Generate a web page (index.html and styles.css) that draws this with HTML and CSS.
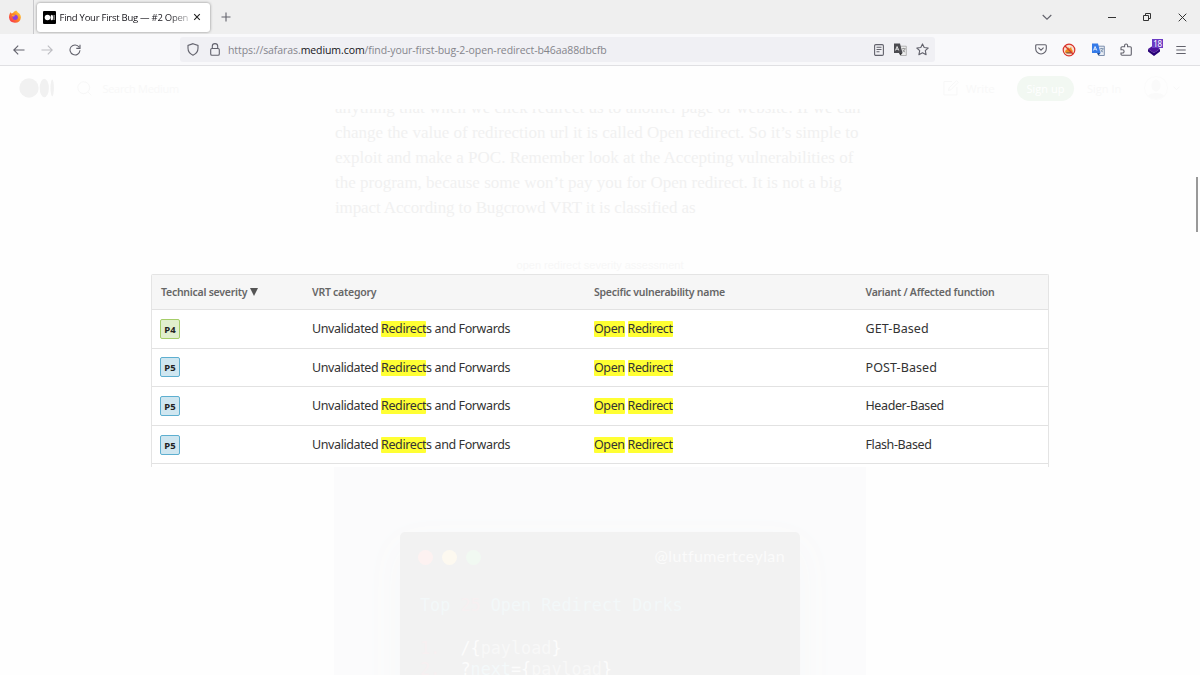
FILE: index.html
```html
<!DOCTYPE html>
<html lang="en">
<head>
    <meta charset="UTF-8">
    <title>Find Your First Bug — #2 Open Redirect</title>
    <link rel="stylesheet" href="styles.css">
</head>
<body>

    <!-- Tab strip -->
    <div class="tabbar">
        <div class="pinned">
            <svg width="14" height="14" viewBox="0 0 14 14">
                <defs>
                    <linearGradient id="fire" x1="1" y1="0" x2="0" y2="1">
                        <stop offset="0" stop-color="#ffe64a"/>
                        <stop offset="0.45" stop-color="#ff8a22"/>
                        <stop offset="1" stop-color="#f5205a"/>
                    </linearGradient>
                </defs>
                <path d="M8.2.6c.8.5 1.2 1.2 1.7 1.9 1.8.7 3 2.7 3 5A6 6 0 0 1 1 7.600c0-2.200.5-3.800 1.500-5.300l1 1.200L5 3c.7-1 1.800-1.900 3.200-2.400z" fill="url(#fire)"/>
                <circle cx="7.200" cy="7.300" r="2.600" fill="#8b3ee0"/>
                <path d="M3.500 5.200c1.500-.6 2.600 0 4 .5-1 .2-1.400.7-2.300.9z" fill="#ffb02e"/>
            </svg>
        </div>
        <div class="tab">
            <svg width="13" height="13" viewBox="0 0 13 13">
                <rect width="13" height="13" rx="1"/>
                <circle cx="4.500" cy="6.500" r="2.800" fill="#fff"/>
                <ellipse cx="8.800" cy="6.500" rx="1.300" ry="2.700" fill="#fff"/>
                <path d="M11.100 4v5" stroke="#fff" stroke-width=".8"/>
            </svg>
            <span class="tab-title">Find Your First Bug — #2 Open</span>
            <svg class="tab-close" width="8" height="8" viewBox="0 0 8 8"><path d="M1.200 1.200l5.600 5.600M6.800 1.200L1.200 6.800"/></svg>
        </div>
        <svg class="icon new-tab" width="10" height="10" viewBox="0 0 10 10"><path d="M5 .5v9M.5 5h9"/></svg>
        <div class="window-buttons">
            <svg class="icon" width="10" height="10" viewBox="0 0 10 10"><path d="M.7 3L5 7.200 9.300 3"/></svg>
            <svg class="icon dark minimize" width="8" height="10" viewBox="0 0 8 10"><path d="M0 5.500h8"/></svg>
            <svg class="icon dark" width="8" height="8" viewBox="0 0 8 8"><path d="M.5 2.500h5v5h-5zM2.500 2.500v-2h5v5h-2"/></svg>
            <svg class="icon dark" width="9" height="9" viewBox="0 0 9 9"><path d="M.7.7l7.600 7.600M8.300.7L.7 8.300"/></svg>
        </div>
    </div>

    <!-- Toolbar -->
    <div class="toolbar">
        <div class="nav-buttons">
            <svg class="icon" width="12" height="12" viewBox="0 0 12 12"><path d="M11.500 6H1M5.200 1.600L.8 6l4.400 4.400"/></svg>
            <svg class="icon faded" width="12" height="12" viewBox="0 0 12 12"><path d="M.5 6H11M6.800 1.600L11.200 6l-4.400 4.400"/></svg>
            <svg class="icon" width="12" height="12" viewBox="0 0 12 12"><path d="M10.200 3.200A5 5 0 1 0 11 6.300M11 .7v3.700H7.300"/></svg>
        </div>
        <div class="urlbar">
            <svg class="icon" width="12" height="13" viewBox="0 0 12 13"><path d="M6 .7l5 1.800v2.800C11 8.700 8.800 11 6 12.200 3.200 11 1 8.700 1 5.300V2.500z"/></svg>
            <svg class="icon lock" width="10" height="13" viewBox="0 0 10 13"><rect x=".7" y="5.500" width="8.600" height="6.800" rx="1.300"/><path d="M2.300 5.500V3.300a2.700 2.700 0 0 1 5.400 0v2.200"/></svg>
            <span class="url">https://safaras.<b>medium.com</b>/find-your-first-bug-2-open-redirect-b46aa88dbcfb</span>
            <div class="url-actions">
                <svg class="icon" width="10" height="12" viewBox="0 0 10 12"><rect x=".6" y=".6" width="8.800" height="10.800" rx="1.200"/><path d="M2.500 3.300h5M2.500 5.500h5M2.500 7.700h3"/></svg>
                <svg width="14" height="13" viewBox="0 0 14 13">
                    <path d="M6.500 3.200h6.800v9.300H7.800z" fill="#eee" stroke="#999" stroke-width=".7"/>
                    <path d="M1 .5h6L9.500 10H1z" fill="#4b4b50"/>
                    <path d="M6 10h3.500L7.300 12.500z" fill="#333"/>
                    <path d="M2.400 7.500l1.700-4 1.700 4M3 6.200h2.200" fill="none" stroke="#fff" stroke-width=".8"/>
                    <path d="M9 5.700h3.500M10.700 4.900v.8M12 5.700c-.4 1.800-1.500 2.700-2.500 3.200M9.800 6.900c.5 1 1.300 1.700 2.300 2.200" fill="none" stroke="#777" stroke-width=".7"/>
                </svg>
                <svg class="icon" width="13" height="13" viewBox="0 0 13 13"><path d="M6.500.9l1.700 3.600 4 .5-2.900 2.700.8 4-3.600-2-3.600 2 .8-4L.8 5l4-.5z" stroke-linejoin="round"/></svg>
            </div>
        </div>
        <div class="extensions">
            <svg class="icon" width="12" height="11" viewBox="0 0 12 11"><path d="M1.700.7h8.600a1 1 0 0 1 1 1v3a5.300 5.300 0 0 1-10.600 0v-3a1 1 0 0 1 1-1zM3.400 3.700L6 6.200l2.600-2.500"/></svg>
            <svg width="14" height="14" viewBox="0 0 14 14">
                <circle cx="7" cy="7" r="5.800" fill="#f7e0d0" stroke="#d9322b" stroke-width="1.200"/>
                <path d="M3 9.800c0-2 .7-3.200 2-3.600L6 4l1.200 1.500 2-1.500.4 2.200c1 .8 1.300 2 1.100 3.600z" fill="#ef8b1d"/>
                <path d="M4.500 10.500h5l.5-1.300H4z" fill="#80502c"/>
                <path d="M3 3l8 8" stroke="#d9322b" stroke-width="1.300"/>
            </svg>
            <svg width="14" height="13" viewBox="0 0 14 13">
                <path d="M6.500 3.200h6.800v9.300H7.800z" fill="#e8edf5" stroke="#7085a5" stroke-width=".9"/>
                <path d="M1 .5h6L9.500 10H1z" fill="#367be8"/>
                <path d="M6 10h3.500L7.300 12.500z" fill="#204b92"/>
                <path d="M2.400 7.500l1.700-4 1.700 4M3 6.200h2.200" fill="none" stroke="#fff" stroke-width=".8"/>
                <path d="M9 5.700h3.500M10.700 4.900v.8M12 5.700c-.4 1.800-1.500 2.700-2.500 3.200M9.800 6.900c.5 1 1.300 1.700 2.300 2.200" fill="none" stroke="#5f7898" stroke-width=".7"/>
            </svg>
            <svg class="icon" width="12" height="13" viewBox="0 0 12 13"><path d="M1 6V4.800a1 1 0 0 1 1-1h2.600V2.500a1.500 1.500 0 0 1 3 0v1.300h2.700a1 1 0 0 1 1 1v6.400a1 1 0 0 1-1 1H2a1 1 0 0 1-1-1V10h1.500a1.500 1.500 0 0 0 0-3.200H1z"/></svg>
            <div class="addon">
                <svg width="14" height="14" viewBox="0 0 14 14">
                    <path d="M7 2l6 4-6 4-6-4z" fill="#4c159c"/>
                    <path d="M1 6l6 4 6-4v2.500l-6 4.500-6-4.500z" fill="#270075"/>
                </svg>
                <span class="addon-badge">18</span>
            </div>
            <svg class="icon" width="10" height="10" viewBox="0 0 10 10"><path d="M.3 1.500h9.400M.3 5h9.400M.3 8.500h9.400"/></svg>
        </div>
    </div>

    <!-- Page, faded out behind the zoomed image -->
    <div class="page">
        <div class="header">
            <svg width="36" height="20" viewBox="0 0 36 20" fill="#f1f1f1">
                <circle cx="10" cy="10" r="9.700"/>
                <ellipse cx="25.300" cy="10" rx="4.600" ry="9.300"/>
                <ellipse cx="33.200" cy="10" rx="1.700" ry="8.500"/>
            </svg>
            <svg class="faint-icon search-icon" width="15" height="15" viewBox="0 0 15 15"><circle cx="6.700" cy="6.700" r="5.900"/><path d="M11 11l3.300 3.300"/></svg>
            <span class="search-text">Search Medium</span>
            <div class="header-right">
                <svg class="faint-icon" width="16" height="16" viewBox="0 0 16 16"><path d="M9 1.500H1v13.500h13V7M5.500 10.500l.7-2.700L13.500.7l1.700 1.700L8 9.700z"/></svg>
                <span class="write">Write</span>
                <span class="signup">Sign up</span>
                <span class="signin">Sign In</span>
                <svg class="avatar" width="24" height="24" viewBox="0 0 24 24"><circle cx="12" cy="12" r="11.500" fill="#fefefe" stroke="#fbfbfb"/><ellipse cx="12" cy="9.500" rx="4.500" ry="6" fill="#fafafa"/><path d="M4 20c1-4 15-4 16 0-5 4-11 4-16 0z" fill="#fafafa"/></svg>
                <svg class="faint-icon" width="7" height="5" viewBox="0 0 7 5"><path d="M.5.7l3 3 3-3"/></svg>
            </div>
        </div>

        <div class="article">
            <div class="text">
                <p class="l1">anything that when we click redirect us to another page or website. If we can</p>
                <p>change the value of redirection url it is called Open redirect. So it’s simple to</p>
                <p>exploit and make a POC. Remember look at the Accepting vulnerabilities of</p>
                <p>the program, because some won’t pay you for Open redirect. It is not a big</p>
                <p class="l5">impact According to Bugcrowd VRT it is classified as</p>
            </div>
            <div class="caption">open redirect severity assessment</div>
            <div class="code-image">
                <div class="code-window">
                    <div class="code-top">
                        <i class="dot red"></i><i class="dot yellow"></i><i class="dot green"></i>
                        <span class="handle">@lutfumertceylan</span>
                    </div>
                    <pre class="code-title">Top <em>25</em> Open Redirect Dorks</pre>
                    <pre class="code-lines"><em>1.</em>  /{<span>payload</span>}
<em>2.</em>  ?<span class="key">next</span>={<span>payload</span>}</pre>
                </div>
            </div>
        </div>
    </div>

    <!-- Zoomed image -->
    <div class="zoomed">
        <div class="row head">
            <span>Technical severity <svg width="8" height="8" viewBox="0 0 8 8"><path d="M0 0h8L4 8z" fill="#555"/></svg></span>
            <span>VRT category</span>
            <span>Specific vulnerability name</span>
            <span>Variant / Affected function</span>
        </div>
        <div class="row">
            <span><b class="p4">P4</b></span>
            <span>Unvalidated <mark>Redirect</mark>s and Forwards</span>
            <span><mark>Open</mark> <mark>Redirect</mark></span>
            <span class="caps">GET-Based</span>
        </div>
        <div class="row">
            <span><b class="p5">P5</b></span>
            <span>Unvalidated <mark>Redirect</mark>s and Forwards</span>
            <span><mark>Open</mark> <mark>Redirect</mark></span>
            <span class="caps">POST-Based</span>
        </div>
        <div class="row">
            <span><b class="p5">P5</b></span>
            <span>Unvalidated <mark>Redirect</mark>s and Forwards</span>
            <span><mark>Open</mark> <mark>Redirect</mark></span>
            <span>Header-Based</span>
        </div>
        <div class="row">
            <span><b class="p5">P5</b></span>
            <span>Unvalidated <mark>Redirect</mark>s and Forwards</span>
            <span><mark>Open</mark> <mark>Redirect</mark></span>
            <span>Flash-Based</span>
        </div>
    </div>

    <div class="scrollbar"></div>

</body>
</html>
```
FILE: styles.css
```css
* {
    box-sizing: border-box;
}

body {
    margin: 0;
    height: 675px;
    overflow: hidden;
    display: flex;
    flex-direction: column;
    background-color: #fefefe;
    font-family: "Noto Sans", sans-serif;
}

svg {
    display: block;
    flex-shrink: 0;
}

.icon {
    fill: none;
    stroke: #62626c;
    stroke-width: 1.1;
}

.icon.dark {
    stroke: #333;
    stroke-width: 1;
}

.icon.faded {
    stroke: #bdbdc2;
}

/* tab strip */
.tabbar {
    height: 34px;
    flex-shrink: 0;
    display: flex;
    align-items: center;
    background-color: #efefef;
}

.pinned {
    width: 34px;
    height: 34px;
    padding: 10px 0 0 8px;
    border-right: 1px solid #c9c9cc;
}

.tab {
    width: 173px;
    height: 29px;
    margin: 0 0 0 3px;
    padding: 0 9px 0 6px;
    display: flex;
    align-items: center;
    background-color: #fff;
    border-radius: 3px;
    box-shadow: 0 0 3px rgba(0, 0, 0, 0.45);
}

.tab-title {
    width: 130px;
    margin-left: 3.5px;
    white-space: nowrap;
    font-family: "Open Sans", sans-serif;
    font-size: 9.5px;
    letter-spacing: -0.26px;
    color: #15141a;
    -webkit-mask-image: linear-gradient(to right, #000 108px, transparent 136px);
    mask-image: linear-gradient(to right, #000 108px, transparent 136px);
}

.tab-close {
    margin-left: 3px;
    fill: none;
    stroke: #222;
    stroke-width: 1.1;
}

.new-tab {
    margin-left: 11px;
}

.window-buttons {
    margin-left: auto;
    padding-right: 13px;
    display: flex;
    align-items: center;
    gap: 27px;
}

.minimize {
    margin-left: 29px;
}

/* toolbar */
.toolbar {
    height: 32px;
    flex-shrink: 0;
    display: flex;
    align-items: center;
    background-color: #f9f9fb;
    border-bottom: 1px solid #e0e0e3;
}

.nav-buttons {
    width: 180px;
    padding-left: 13px;
    display: flex;
    gap: 16px;
}

.urlbar {
    width: 755px;
    height: 25px;
    padding: 0 6px 0 7px;
    display: flex;
    align-items: center;
    background-color: #f0f0f4;
    border-radius: 3px;
}

.lock {
    margin-left: 11px;
}

.url {
    margin: 1px 0 0 8px;
    font-family: "Open Sans", sans-serif;
    font-size: 10.5px;
    letter-spacing: -0.08px;
    white-space: nowrap;
    color: #85858c;
}

.url b {
    font-weight: normal;
    color: #15141a;
}

.url-actions {
    margin-left: auto;
    display: flex;
    align-items: center;
    gap: 9px;
}

.extensions {
    margin-left: auto;
    padding-right: 14px;
    display: flex;
    align-items: center;
    gap: 15px;
}

.addon {
    position: relative;
}

.addon-badge {
    position: absolute;
    left: 5px;
    top: -4px;
    width: 11px;
    height: 9px;
    background-color: #6a3bc4;
    color: #fff;
    font-size: 8px;
    line-height: 9px;
    text-align: center;
    letter-spacing: -0.3px;
}

/* page */
.page {
    flex: 1;
    min-height: 0;
    overflow: hidden;
}

.header {
    height: 43px;
    padding: 1px 20px 0 18.5px;
    display: flex;
    align-items: center;
    font-family: "Open Sans", sans-serif;
    font-size: 11px;
    color: #f8f8f8;
}

.faint-icon {
    fill: none;
    stroke: #f7f7f7;
    stroke-width: 1;
}

.search-icon {
    margin-left: 22px;
}

.search-text {
    margin-left: 11px;
    letter-spacing: -0.3px;
}

.header-right {
    margin-left: auto;
    display: flex;
    align-items: center;
}

.write {
    width: 51px;
    margin-left: 7px;
    font-size: 11.5px;
}

.signup {
    width: 57px;
    height: 25px;
    border-radius: 13px;
    background-color: #f2f8f2;
    color: #fff;
    line-height: 25px;
    text-align: center;
}

.signin {
    width: 57px;
    margin-left: 13px;
}

.avatar {
    margin-right: 5px;
}

.article {
    width: 532px;
    margin: 0 0 0 334px;
}

.text {
    height: 148px;
    padding-left: 1px;
    overflow: hidden;
    font-family: "Liberation Serif", serif;
    font-size: 17px;
    color: #f1f1f1;
}

.text p {
    margin: 0;
    line-height: 25px;
    white-space: nowrap;
}

.text .l1 {
    margin-top: -14px;
    letter-spacing: 0.04px;
}

.text .l5 {
    letter-spacing: -0.12px;
}

.caption {
    height: 16px;
    font-family: "Liberation Sans", sans-serif;
    font-size: 11px;
    line-height: 16px;
    text-align: center;
    color: #f7f7f7;
}

.code-image {
    height: 400px;
    margin-top: 194px;
    padding: 65px 66px 0;
    background-color: #fbfbfc;
}

.code-window {
    height: 335px;
    padding: 18px 15px 0 18px;
    border-radius: 5px;
    background-color: #f2f2f2;
    box-shadow: 0 15px 40px 5px #f8f9f9;
}

.code-top {
    display: flex;
    align-items: center;
    gap: 9px;
    height: 15px;
}

.dot {
    width: 15px;
    height: 15px;
    border-radius: 50%;
}

.red {
    background-color: #fdf2f1;
}

.yellow {
    background-color: #fdf9f0;
}

.green {
    background-color: #f1f9f2;
}

.handle {
    margin: -4px 0 0 auto;
    font-family: Lato, sans-serif;
    font-size: 16px;
    letter-spacing: 0.4px;
    color: #fbfbfb;
}

.code-window pre {
    margin: 0;
    font-family: "DejaVu Sans Mono", monospace;
    font-size: 16.8px;
    line-height: 21.5px;
    color: #fcfcfc;
}

.code-window .code-title {
    margin: 30px 0 21px 2px;
    color: #f3f8f9;
}

.code-window .code-lines {
    margin-left: 2px;
}

.code-window em {
    font-style: normal;
    color: #f7f0f1;
}

.code-lines span {
    color: #f8f8f8;
}

.code-lines .key {
    color: #f4f9fa;
}

/* zoomed image */
.zoomed {
    position: absolute;
    left: 150.5px;
    top: 273.5px;
    width: 898px;
    height: 193px;
    overflow: hidden;
    background-color: #fff;
    border: 1px solid #e4e4e4;
    border-bottom: none;
    border-radius: 2px 2px 0 0;
    color: #333;
    font-size: 12.5px;
    letter-spacing: -0.4px;
}

.row {
    height: 38.6px;
    padding-left: 9.5px;
    display: grid;
    grid-template-columns: 151px 282px 271.5px 1fr;
    align-items: center;
    border-bottom: 1px solid #e2e2e2;
    white-space: nowrap;
}

.caps {
    letter-spacing: 0.1px;
}

.head {
    height: 35.5px;
    background-color: #f6f6f6;
    color: #666;
    font-size: 10.5px;
    font-weight: 600;
    letter-spacing: -0.25px;
}

.head svg {
    display: inline-block;
}

mark {
    padding: 0;
    border-radius: 1px;
    background-color: #ff3;
    color: inherit;
    line-height: 16px;
    display: inline-block;
}

.p4, .p5 {
    width: 20px;
    height: 20px;
    margin-left: -1px;
    display: block;
    border: 1px solid #a5cd69;
    border-radius: 2px;
    background-color: #e1efcd;
    color: #222;
    font-size: 9.5px;
    line-height: 19px;
    text-align: center;
    letter-spacing: 0;
}

.p5 {
    border-color: #5eafd0;
    background-color: #cfe6f0;
}

.scrollbar {
    position: absolute;
    right: 2px;
    top: 177px;
    width: 2px;
    height: 55px;
    background-color: #999;
}
```
